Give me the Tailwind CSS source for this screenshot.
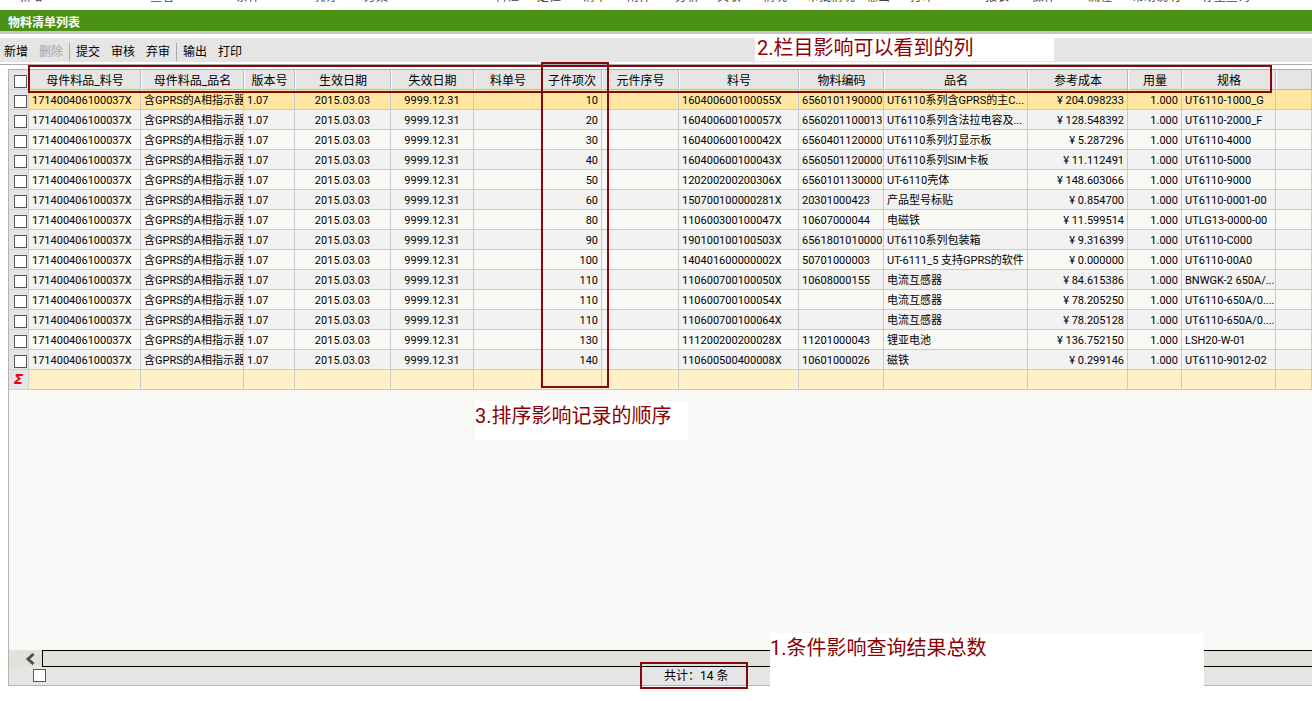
<!DOCTYPE html>
<html lang="zh-CN">
<head>
<meta charset="utf-8">
<title>物料清单列表</title>
<script src="https://cdn.jsdelivr.net/npm/@tailwindcss/browser@4"></script>
</head>
<body class="bg-white text-black font-['Roboto','Noto_Sans_CJK_SC',sans-serif] text-[12px]">
<div class="relative flex h-screen flex-col overflow-hidden">
  <nav class="relative h-[10px] shrink-0 overflow-hidden text-[12px] leading-[16px] text-[#444]" aria-label="菜单">
    <div class="absolute bottom-[5px] left-[19px] flex whitespace-nowrap">
      <a href="#" class="w-[131px]">新增</a><a href="#" class="w-[86px]">查看</a><a href="#" class="w-[79px]">条件</a><a href="#" class="w-[49px]">排序</a><a href="#" class="w-[131px]">方案</a><a href="#" class="w-[42px]">料框</a><a href="#" class="w-[46px]">定位</a><a href="#" class="w-[44px]">清单</a><a href="#" class="w-[48px]">附件</a><a href="#" class="w-[42px]">分析</a><a href="#" class="w-[46px]">关联</a><a href="#" class="w-[44px]">情况</a><a href="#" class="w-[59px]">审批情况</a><a href="#" class="w-[44px]">输出</a><a href="#" class="w-[75px]">打印</a><a href="#" class="w-[47px]">报表</a><a href="#" class="w-[56px]">操作</a><a href="#" class="w-[44px]">流程</a><a href="#" class="w-[70px]">帮助说明</a><a href="#">存量查询</a>
    </div>
  </nav>
  <h1 class="h-6 shrink-0 border-b-3 border-[#c6c6c6] bg-[#4b9113] pt-[2px] pl-2 text-[12px] leading-[23px] font-bold text-white">物料清单列表</h1>
  <div class="mt-1 flex h-6 shrink-0 items-center bg-[#e5e5e5] pt-1 pl-1 text-[12px] leading-5">
    <button class="mr-[11px]">新增</button>
    <button disabled class="text-[#a3a3a3]">删除</button>
    <span class="mx-[6px] h-[18px] w-px bg-[#aaa]"></span>
    <button class="mr-[11px]">提交</button>
    <button class="mr-[11px]">审核</button>
    <button>弃审</button>
    <span class="mx-[6px] h-[18px] w-px bg-[#aaa]"></span>
    <button class="mr-[11px]">输出</button>
    <button>打印</button>
  </div>
  <div class="mt-[2px] h-px shrink-0 bg-[#aaa]"></div>

  <main class="mt-1 mb-[15px] ml-2 flex min-h-0 flex-1 flex-col border-t border-b border-l border-[#b4b4ac] bg-[#f8f8f6]">
    <div class="min-h-0 flex-1 overflow-hidden">
      <table class="w-full table-fixed border-separate border-spacing-0 text-[11px] leading-4">
        <colgroup>
          <col class="w-[20px]"><col class="w-[112px]"><col class="w-[103px]"><col class="w-[51px]"><col class="w-[96px]"><col class="w-[83px]"><col class="w-[68px]"><col class="w-[60px]"><col class="w-[77px]"><col class="w-[120px]"><col class="w-[85px]"><col class="w-[144px]"><col class="w-[100px]"><col class="w-[54px]"><col class="w-[94px]"><col>
        </colgroup>
        <thead id="head"></thead>
        <tbody id="rows"></tbody>
        <tfoot id="sum"></tfoot>
      </table>
    </div>
    <div class="flex h-[17px] shrink-0 bg-[#e2e1dc]">
      <button class="flex w-[33px] items-center justify-end pr-[7px]" aria-label="向左滚动">
        <svg width="10" height="12" viewBox="0 0 10 12"><path d="M8.500 1 3 6 8.500 11" fill="none" stroke="#505050" stroke-width="3"/></svg>
      </button>
      <div class="flex-1 border-y border-l border-black"></div>
    </div>
    <div class="flex h-[18px] shrink-0 items-start bg-[#e5e5e5]">
      <input type="checkbox" aria-label="全部" class="mt-[2px] ml-6 size-[13px] appearance-none border border-[#555] bg-white">
      <div class="relative ml-[618px] text-[12px] leading-[18px]">共计：14 条
        <span class="absolute -top-[5px] -right-[20px] -bottom-[4px] -left-[24px] border-2 border-[#82090d]"></span>
      </div>
    </div>
  </main>

  <div class="absolute top-[65px] left-[28px] h-[28px] w-[1244px] border-2 border-[#82090d]"></div>
  <div class="absolute top-[62px] left-[541px] h-[326px] w-[68px] border-2 border-[#82090d]"></div>
  <p class="absolute top-[38px] left-[755px] h-[23px] w-[299px] bg-white pl-[2px] text-[20px] leading-[21px] whitespace-nowrap text-[#8b0000]">2.栏目影响可以看到的列</p>
  <p class="absolute top-[401px] left-[475px] h-[39px] w-[213px] bg-white text-[20px] leading-[30px] whitespace-nowrap text-[#8b0000]">3.排序影响记录的顺序</p>
  <p class="absolute bottom-[10px] left-[770px] h-[58px] w-[434px] bg-white text-[20px] leading-[30px] whitespace-nowrap text-[#8b0000]">1.条件影响查询结果总数</p>
</div>

<script>
const heads = ['母件料品_料号','母件料品_品名','版本号','生效日期','失效日期','料单号','子件项次','元件序号','料号','物料编码','品名','参考成本','用量','规格',''];
const data = [
  ['10','160400600100055X','6560101190000','UT6110系列含GPRS的主C...','204.098233','UT6110-1000_G'],
  ['20','160400600100057X','6560201100013','UT6110系列含法拉电容及...','128.548392','UT6110-2000_F'],
  ['30','160400600100042X','6560401120000','UT6110系列灯显示板','5.287296','UT6110-4000'],
  ['40','160400600100043X','6560501120000','UT6110系列SIM卡板','11.112491','UT6110-5000'],
  ['50','120200200200306X','6560101130000','UT-6110壳体','148.603066','UT6110-9000'],
  ['60','150700100000281X','20301000423','产品型号标贴','0.854700','UT6110-0001-00'],
  ['80','110600300100047X','10607000044','电磁铁','11.599514','UTLG13-0000-00'],
  ['90','190100100100503X','6561801010000','UT6110系列包装箱','9.316399','UT6110-C000'],
  ['100','140401600000002X','50701000003','UT-6111_5 支持GPRS的软件','0.000000','UT6110-00A0'],
  ['110','110600700100050X','10608000155','电流互感器','84.615386','BNWGK-2 650A/...'],
  ['110','110600700100054X','','电流互感器','78.205250','UT6110-650A/0....'],
  ['110','110600700100064X','','电流互感器','78.205128','UT6110-650A/0....'],
  ['130','111200200200028X','11201000043','锂亚电池','136.752150','LSH20-W-01'],
  ['140','110600500400008X','10601000026','磁铁','0.299146','UT6110-9012-02']
];
const cell = 'h-5 overflow-hidden whitespace-nowrap border-r border-b border-[#c9c9d2] p-0 pt-[3px] ';
const box = label => `<input type="checkbox" aria-label="${label}" class="mt-[5px] ml-[5px] block size-[13px] appearance-none border border-[#555] bg-white">`;
const gutter = 'h-5 border-r border-b border-[#d0d0d0] bg-[#e5e5e5] p-0 align-top ';
document.getElementById('head').innerHTML = `<tr><th class="${gutter}">${box('全选')}</th>` +
  heads.map(h => `<th class="h-5 overflow-hidden whitespace-nowrap border-r border-b border-l border-r-[#b8b8c0] border-b-[#b8b8c0] border-l-white bg-[#e5e5e5] p-0 pt-[3px] text-[12px] font-normal leading-4">${h}</th>`).join('') + '</tr>';
const L = 'pl-[3px] text-left', R = 'pr-[3px] text-right', C = 'text-center';
document.getElementById('rows').innerHTML = data.map((d, i) => {
  const bg = i === 0 ? 'bg-[#ffe7a2]' : i % 2 ? 'bg-[#f2f2f2]' : 'bg-[#f8f8f5]';
  const cols = [['171400406100037X',L],['含GPRS的A相指示器',L],['1.07',L],['2015.03.03',C],['9999.12.31',C],['',L],[d[0],R],['',L],[d[1],L],[d[2],L],[d[3],L],['¥ ' + d[4],R],['1.000',R],[d[5],L],['',L]];
  return `<tr class="${bg}"><td class="${gutter}">${box('选择第' + (i + 1) + '行')}</td>` + cols.map(([t, a]) => `<td class="${cell}${a}">${t}</td>`).join('') + '</tr>';
}).join('');
document.getElementById('sum').innerHTML = `<tr class="bg-[#fff0c8]"><td class="${gutter} text-center text-[14px] leading-[19px] font-bold italic text-red-600 font-['DejaVu_Sans',sans-serif]">Σ</td>` + heads.map(() => `<td class="${cell}"></td>`).join('') + '</tr>';
</script>
</body>
</html>
